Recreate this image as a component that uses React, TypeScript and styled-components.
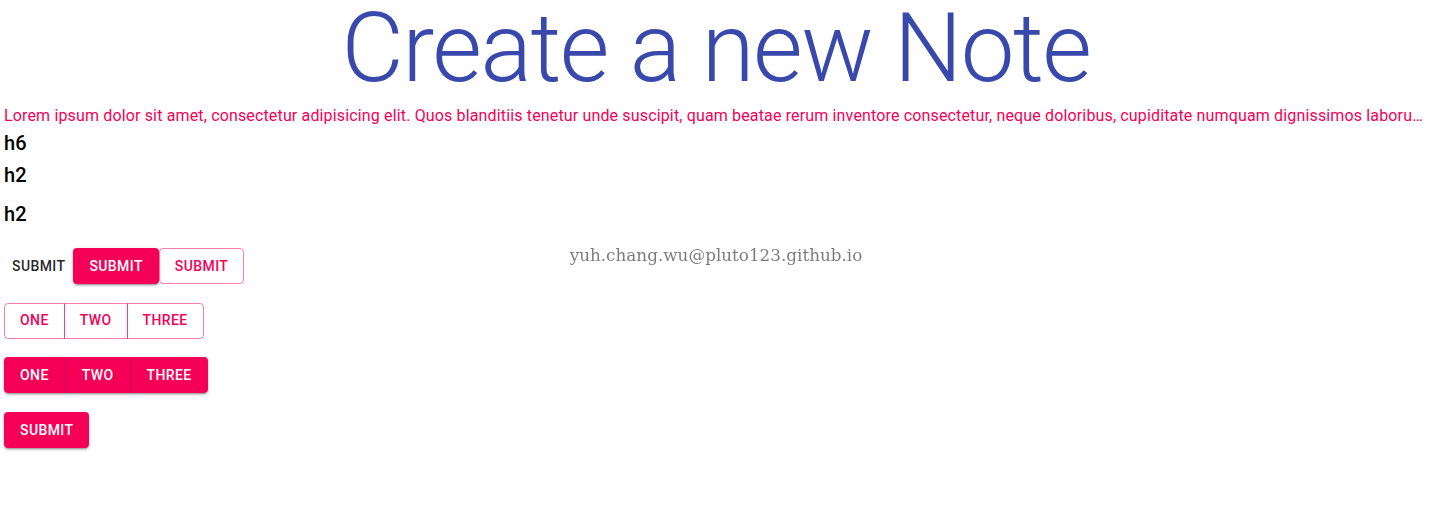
import styled, { createGlobalStyle, css } from 'styled-components'

//-----------------------------------------------------------------------------
// Theme values
//-----------------------------------------------------------------------------
const PINK = '#f50057'
const PINK_DARK = '#c51162'
const INDIGO = '#3949ab'
const SHADOW =
  '0px 3px 1px -2px rgba(0,0,0,0.2), 0px 2px 2px 0px rgba(0,0,0,0.14), 0px 1px 5px 0px rgba(0,0,0,0.12)'

const GlobalStyle = createGlobalStyle`
  html, body {
    margin: 0;
    padding: 0;
    background: #fff;
  }
  body {
    font-family: Roboto, "Liberation Sans", Arial, sans-serif;
    color: rgba(0, 0, 0, 0.87);
  }
`

//-----------------------------------------------------------------------------
// Component
//-----------------------------------------------------------------------------
const App = (): JSX.Element => {
  return (
    <Page>
      <GlobalStyle />
      <Title>Create a new Note</Title>
      <Lead>
        Lorem ipsum dolor sit amet, consectetur adipisicing elit. Quos
        blanditiis tenetur unde suscipit, quam beatae rerum inventore
        consectetur, neque doloribus, cupiditate numquam dignissimos laborum
        fugiat deleniti? Eum quasi quidem quibusdam.
      </Lead>
      <Heading>h6</Heading>
      <Heading>h2</Heading>
      <Heading $spaced>h2</Heading>

      <Row>
        <Button $variant="text">Submit</Button>
        <Button $variant="contained">Submit</Button>
        <Button $variant="outlined">Submit</Button>
      </Row>

      <Row>
        <Group>
          <GroupButton $variant="outlined">One</GroupButton>
          <GroupButton $variant="outlined">Two</GroupButton>
          <GroupButton $variant="outlined">Three</GroupButton>
        </Group>
      </Row>

      <Row>
        <Group $raised>
          <GroupButton $variant="contained">One</GroupButton>
          <GroupButton $variant="contained">Two</GroupButton>
          <GroupButton $variant="contained">Three</GroupButton>
        </Group>
      </Row>

      <Row>
        <Button $variant="contained">Submit</Button>
      </Row>

      <Watermark>yuh.chang.wu@pluto123.github.io</Watermark>
    </Page>
  )
}

//-----------------------------------------------------------------------------
// Styled Components
//-----------------------------------------------------------------------------
type Variant = 'text' | 'contained' | 'outlined'

const Page = styled.div`
  padding: 0 4px 40px;
  display: flex;
  flex-direction: column;
  align-items: flex-start;
`
const Title = styled.h1`
  align-self: stretch;
  margin: 0 0 9px;
  font-size: 96px;
  font-weight: 300;
  line-height: 1;
  letter-spacing: -1.5px;
  color: ${INDIGO};
  text-align: center;
`
const Lead = styled.p`
  align-self: stretch;
  margin: 0;
  font-size: 16px;
  line-height: 22px;
  letter-spacing: 0.00938em;
  color: ${PINK};
  white-space: nowrap;
  overflow: hidden;
  text-overflow: ellipsis;
`
const Heading = styled.h6<{ $spaced?: boolean }>`
  margin: ${(p) => (p.$spaced ? '7px 0 0' : '0')};
  font-size: 20px;
  font-weight: 500;
  line-height: 1.6;
  letter-spacing: 0.0075em;
  color: #000;
`
const Row = styled.div`
  display: flex;
  margin-top: 18.7px;
  &:first-of-type {
    margin-top: 18px;
  }
`
const buttonBase = css<{ $variant: Variant }>`
  box-sizing: border-box;
  height: 36px;
  border-radius: 4px;
  font-family: Roboto, "Liberation Sans", Arial, sans-serif;
  font-size: 14px;
  font-weight: 500;
  line-height: 1.75;
  letter-spacing: 0.02857em;
  text-transform: uppercase;
  cursor: pointer;
  display: inline-flex;
  align-items: center;
  justify-content: center;
  ${(p) =>
    p.$variant === 'contained'
      ? css`
          padding: 6px 16px;
          border: none;
          background: ${PINK};
          color: #fff;
        `
      : p.$variant === 'outlined'
      ? css`
          padding: 5px 15px;
          border: 1px solid rgba(245, 0, 87, 0.5);
          background: transparent;
          color: ${PINK};
        `
      : css`
          padding: 6px 8px;
          border: none;
          background: transparent;
          color: rgba(0, 0, 0, 0.87);
        `}
`
const Button = styled.button<{ $variant: Variant }>`
  ${buttonBase};
  min-width: 64px;
  box-shadow: ${(p) => (p.$variant === 'contained' ? SHADOW : 'none')};
`
const Group = styled.div<{ $raised?: boolean }>`
  display: inline-flex;
  border-radius: 4px;
  box-shadow: ${(p) => (p.$raised ? SHADOW : 'none')};
`
const GroupButton = styled.button<{ $variant: Variant }>`
  ${buttonBase};
  min-width: 40px;
  &:not(:first-child) {
    border-top-left-radius: 0;
    border-bottom-left-radius: 0;
    ${(p) => p.$variant === 'outlined' && 'margin-left: -1px;'}
  }
  &:not(:last-child) {
    border-top-right-radius: 0;
    border-bottom-right-radius: 0;
    ${(p) => p.$variant === 'contained' && `border-right: 1px solid ${PINK_DARK};`}
  }
`
const Watermark = styled.div`
  position: fixed;
  left: 0;
  right: 0;
  top: 243px;
  text-align: center;
  font-family: "DejaVu Serif", "Liberation Serif", serif;
  font-size: 16.8px;
  line-height: 24px;
  color: rgba(0, 0, 0, 0.52);
  pointer-events: none;
`

export default App
